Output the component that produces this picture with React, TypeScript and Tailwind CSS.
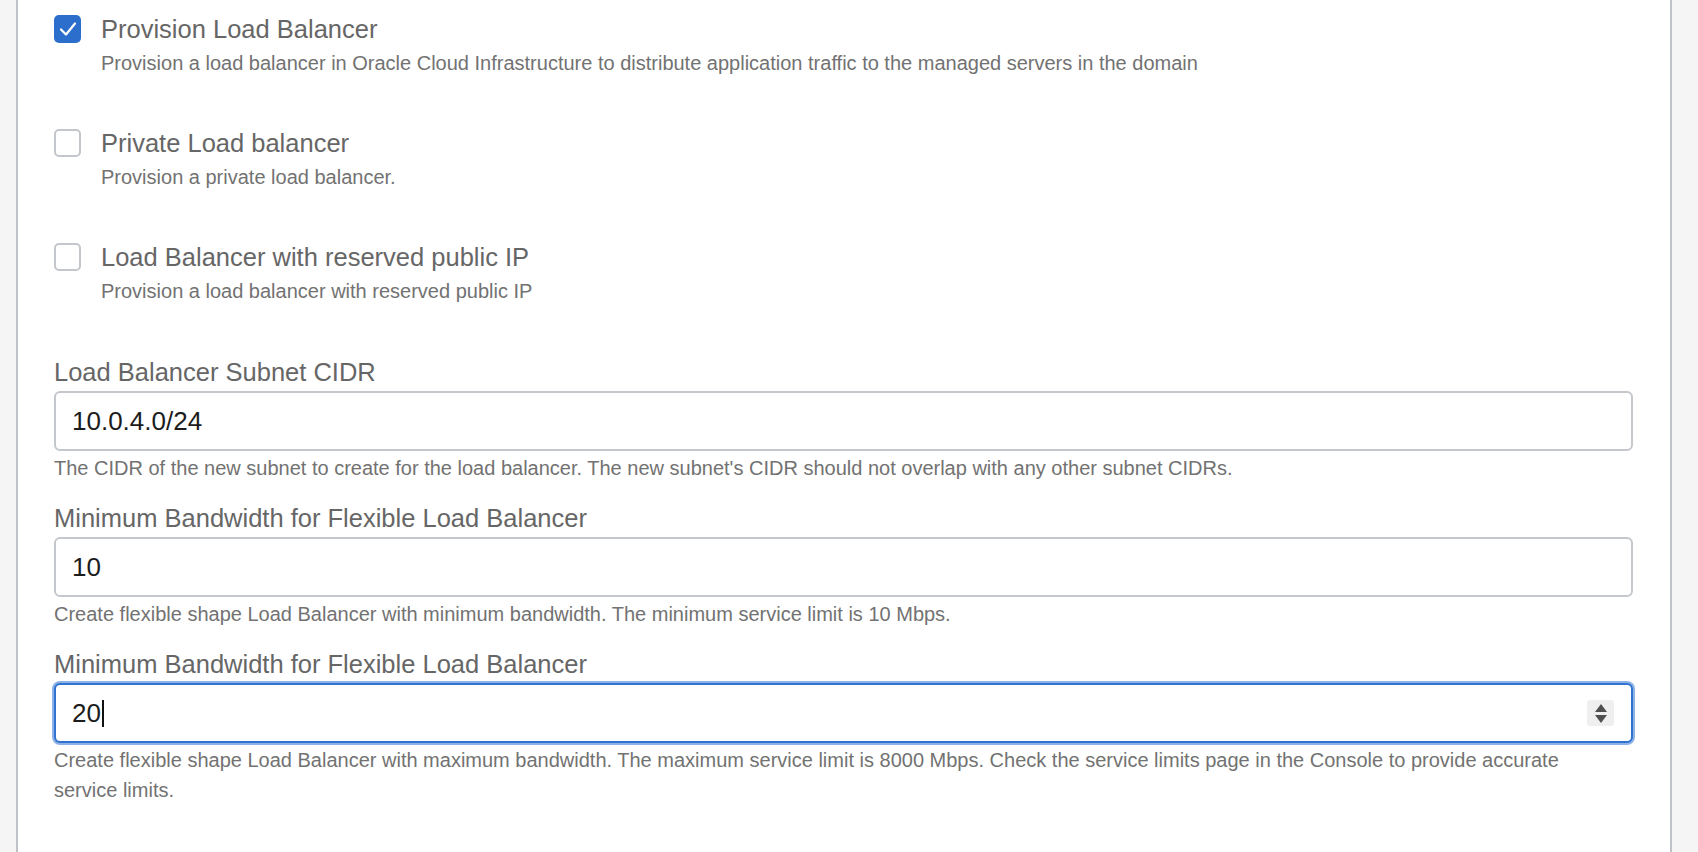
import React from "react";

const font = { fontFamily: '"Liberation Sans", Arial, sans-serif' };

const options = [
  {
    title: "Provision Load Balancer",
    desc: "Provision a load balancer in Oracle Cloud Infrastructure to distribute application traffic to the managed servers in the domain",
    checked: true,
  },
  {
    title: "Private Load balancer",
    desc: "Provision a private load balancer.",
    checked: false,
  },
  {
    title: "Load Balancer with reserved public IP",
    desc: "Provision a load balancer with reserved public IP",
    checked: false,
  },
];

const CheckBox = ({ checked }: { checked: boolean }) =>
  checked ? (
    <span className="mt-[1px] flex h-[28px] w-[27px] flex-shrink-0 items-center justify-center rounded-[5px] bg-[#2c6ecb]">
      <svg width="20" height="20" viewBox="0 0 20 20" fill="none">
        <path d="M3 10.5 L8 15.5 L17 4.5" stroke="white" strokeWidth="2.2" strokeLinecap="round" strokeLinejoin="round" />
      </svg>
    </span>
  ) : (
    <span className="mt-[1px] h-[28px] w-[27px] flex-shrink-0 rounded-[5px] border-2 border-[#c3c6ca] bg-white" />
  );

const Field = ({
  label,
  value,
  help,
  focused,
}: {
  label: string;
  value: string;
  help: string;
  focused?: boolean;
}) => (
  <div className="flex flex-col">
    <label className="text-[25.5px] leading-[30px] text-[#666]">{label}</label>
    {focused ? (
      <div className="mt-[4px] flex h-[60px] items-center rounded-[6px] border-2 border-[#2f72cf] bg-white pl-[16px] pr-[17px] shadow-[0_0_0_2px_#8db2e6]">
        <span className="text-[26px] text-[#1c1c1c]">{value}</span>
        <span className="ml-[1px] h-[27px] w-[2px] bg-[#111]" />
        <span className="ml-auto flex h-[26px] w-[27px] flex-col items-center justify-center gap-[3px] rounded-[3px] bg-[#efefef]">
          <svg width="12" height="8" viewBox="0 0 12 8"><path d="M6 0 L12 8 L0 8 Z" fill="#505050" /></svg>
          <svg width="12" height="8" viewBox="0 0 12 8"><path d="M0 0 L12 0 L6 8 Z" fill="#505050" /></svg>
        </span>
      </div>
    ) : (
      <input
        readOnly
        value={value}
        style={font}
        className="mt-[4px] h-[60px] rounded-[6px] border-2 border-[#c4c7cb] bg-white px-[16px] text-[26px] text-[#1c1c1c] outline-none"
      />
    )}
    <p className="mt-[2px] pr-[40px] text-[20px] leading-[30px] text-[#727272]">{help}</p>
  </div>
);

export default function App() {
  return (
    <div style={font} className="flex h-[852px] w-full bg-[#f5f5f5]">
      <div className="ml-[16px] flex h-full w-[1656px] flex-col border-x-2 border-[#bfc2c7] bg-white pl-[36px] pr-[37px] pt-[14px]">
        <div className="flex flex-col gap-[50px]">
          {options.map((o) => (
            <div key={o.title} className="flex items-start gap-[20px]">
              <CheckBox checked={o.checked} />
              <div className="flex flex-col gap-[4px]">
                <span className="text-[25.5px] leading-[30px] text-[#666]">{o.title}</span>
                <span className="text-[20px] leading-[30px] text-[#727272]">{o.desc}</span>
              </div>
            </div>
          ))}
        </div>

        <div className="mt-[51px] flex flex-col gap-[20px]">
          <Field
            label="Load Balancer Subnet CIDR"
            value="10.0.4.0/24"
            help="The CIDR of the new subnet to create for the load balancer. The new subnet's CIDR should not overlap with any other subnet CIDRs."
          />
          <Field
            label="Minimum Bandwidth for Flexible Load Balancer"
            value="10"
            help="Create flexible shape Load Balancer with minimum bandwidth. The minimum service limit is 10 Mbps."
          />
          <Field
            label="Minimum Bandwidth for Flexible Load Balancer"
            value="20"
            focused
            help="Create flexible shape Load Balancer with maximum bandwidth. The maximum service limit is 8000 Mbps. Check the service limits page in the Console to provide accurate service limits."
          />
        </div>
      </div>
    </div>
  );
}
